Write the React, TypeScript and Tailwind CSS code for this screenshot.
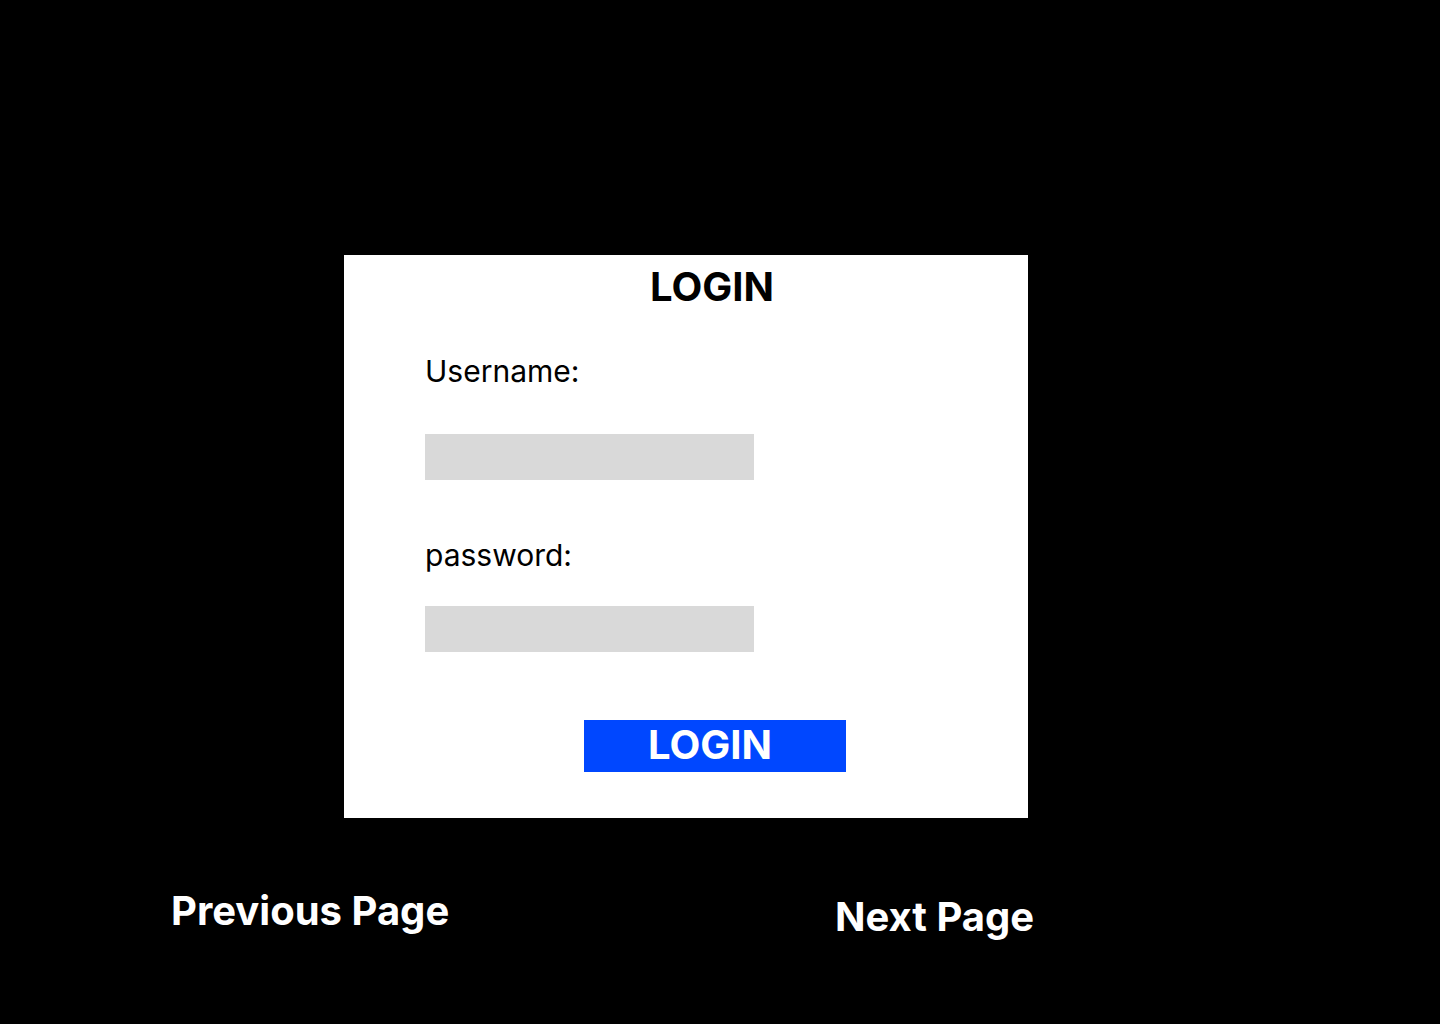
import React from 'react';

const App: React.FC = () => {
  return (
    <div
      className="min-h-screen w-full bg-black flex flex-col"
      style={{ fontFamily: 'Inter, "Noto Sans", sans-serif' }}
    >
      {/* Login card */}
      <div className="ml-[344px] mt-[255px] w-[684px] h-[563px] bg-white flex flex-col">
        <h1 className="mt-[12px] pl-[52px] text-center text-[40px] leading-[40px] font-bold text-black">
          LOGIN
        </h1>

        <label className="mt-[49px] ml-[81px] text-[30px] leading-[30px] text-black">
          Username:
        </label>
        <div className="mt-[48px] ml-[81px] w-[329px] h-[46px] bg-[#d9d9d9]" />

        <label className="mt-[60px] ml-[81px] text-[30px] leading-[30px] text-black">
          password:
        </label>
        <div className="mt-[36px] ml-[81px] w-[329px] h-[46px] bg-[#d9d9d9]" />

        <button className="mt-[68px] ml-[240px] w-[262px] h-[52px] bg-[#0047ff] pr-[10px] pb-[3px] text-center text-[40px] leading-[40px] font-bold text-white">
          LOGIN
        </button>
      </div>

      {/* Page navigation */}
      <div className="mt-[73px] pl-[171px] flex items-start text-white font-bold text-[40px] leading-[40px]">
        <span className="w-[664px]">Previous Page</span>
        <span className="mt-[6px]">Next Page</span>
      </div>
    </div>
  );
};

export default App;
